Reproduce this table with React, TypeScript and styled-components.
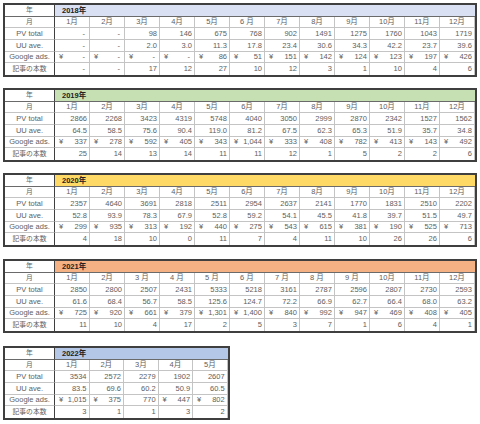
import styled, { createGlobalStyle } from 'styled-components';

const GlobalStyle = createGlobalStyle`
  html, body {
    margin: 0;
    padding: 0;
    background: #fff;
  }
  * {
    box-sizing: border-box;
  }
`;

const Page = styled.div`
  padding: 3px 3px 0 3px;
  display: flex;
  flex-direction: column;
  gap: 11px;
  font-family: 'Liberation Sans', 'Noto Sans CJK JP', sans-serif;
  font-size: 7.5px;
  color: #5e5e5e;
`;

const Sheet = styled.div<{ $months: number; $lift?: number }>`
  display: grid;
  grid-template-columns: 50px repeat(${(p) => p.$months}, 1fr);
  grid-template-rows: repeat(6, 1fr);
  width: ${(p) => 50 + p.$months * 35.33}px;
  height: 74px;
  border: 2px solid #3f3f3f;
  margin-top: ${(p) => p.$lift ?? 0}px;
`;

const Cell = styled.div<{ $align?: 'left' | 'center' | 'right'; $last?: boolean; $topRow?: boolean }>`
  display: flex;
  align-items: center;
  justify-content: ${(p) =>
    p.$align === 'center' ? 'center' : p.$align === 'left' ? 'flex-start' : 'flex-end'};
  padding: 0 2px;
  border-right: 1px solid #c4c4c4;
  border-bottom: ${(p) => (p.$last ? 'none' : p.$topRow ? '1px solid #6a6a6a' : '1px solid #c4c4c4')};
  white-space: nowrap;
  overflow: hidden;
  line-height: 1;
`;

const LabelCell = styled(Cell)`
  border-right: 1px solid #3f3f3f;
`;

const Cjk = styled.span`
  font-size: 6.8px;
`;

const YearCell = styled(Cell)<{ $bg: string }>`
  grid-column: 2 / -1;
  background: ${(p) => p.$bg};
  color: #222;
  font-weight: bold;
  padding-left: 7px;
  border-right: none;
`;

const MoneyCell = styled(Cell)`
  justify-content: space-between;
  padding-left: 4px;
`;

const Dash = styled.span`
  padding-right: 2px;
`;

type Year = {
  label: string;
  bg: string;
  months: string[];
  pv: string[];
  uu: string[];
  ads: string[];
  posts: string[];
  lift?: number;
};

const years: Year[] = [
  {
    label: '2018年',
    bg: '#d9e0f3',
    months: ['1月', '2月', '3月', '4月', '5月', '6 月', '7月', '8月', '9月', '10月', '11月', '12月'],
    pv: ['-', '-', '98', '146', '675', '768', '902', '1491', '1275', '1760', '1043', '1719'],
    uu: ['-', '-', '2.0', '3.0', '11.3', '17.8', '23.4', '30.6', '34.3', '42.2', '23.7', '39.6'],
    ads: ['¥ -', '¥ -', '¥ -', '¥ -', '¥ 86', '¥ 51', '¥ 151', '¥ 142', '¥ 124', '¥ 123', '¥ 197', '¥ 426'],
    posts: ['-', '-', '17', '12', '27', '10', '12', '3', '1', '10', '4', '6'],
  },
  {
    label: '2019年',
    bg: '#c6e0b4',
    months: ['1月', '2月', '3月', '4月', '5月', '6月', '7月', '8月', '9月', '10月', '11月', '12月'],
    pv: ['2866', '2268', '3423', '4319', '5748', '4040', '3050', '2999', '2870', '2342', '1527', '1562'],
    uu: ['64.5', '58.5', '75.6', '90.4', '119.0', '81.2', '67.5', '62.3', '65.3', '51.9', '35.7', '34.8'],
    ads: ['¥ 337', '¥ 278', '¥ 592', '¥ 405', '¥ 343', '¥ 1,044', '¥ 333', '¥ 408', '¥ 782', '¥ 413', '¥ 143', '¥ 492'],
    posts: ['25', '14', '13', '14', '11', '11', '12', '1', '5', '2', '2', '6'],
  },
  {
    label: '2020年',
    bg: '#ffd966',
    months: ['1月', '2月', '3月', '4月', '5月', '6月', '7月', '8月', '9月', '10月', '11月', '12月'],
    pv: ['2357', '4640', '3691', '2818', '2511', '2954', '2637', '2141', '1770', '1831', '2510', '2202'],
    uu: ['52.8', '93.9', '78.3', '67.9', '52.8', '59.2', '54.1', '45.5', '41.8', '39.7', '51.5', '49.7'],
    ads: ['¥ 299', '¥ 935', '¥ 313', '¥ 192', '¥ 440', '¥ 275', '¥ 543', '¥ 615', '¥ 381', '¥ 190', '¥ 525', '¥ 713'],
    posts: ['4', '18', '10', '0', '11', '7', '4', '11', '10', '26', '26', '6'],
  },
  {
    label: '2021年',
    bg: '#f4b183',
    months: ['1月', '2月', '3 月', '4 月', '5 月', '6 月', '7 月', '8 月', '9 月', '10月', '11月', '12月'],
    pv: ['2850', '2800', '2507', '2431', '5333', '5218', '3161', '2787', '2596', '2807', '2730', '2593'],
    uu: ['61.6', '68.4', '56.7', '58.5', '125.6', '124.7', '72.2', '66.9', '62.7', '66.4', '68.0', '63.2'],
    ads: ['¥ 725', '¥ 920', '¥ 661', '¥ 379', '¥ 1,301', '¥ 1,400', '¥ 840', '¥ 992', '¥ 947', '¥ 469', '¥ 408', '¥ 405'],
    posts: ['11', '10', '4', '17', '2', '5', '3', '7', '1', '6', '4', '1'],
    lift: 1,
  },
  {
    label: '2022年',
    bg: '#b4c7e7',
    months: ['1月', '2月', '3月', '4月', '5月'],
    pv: ['3534', '2572', '2279', '1902', '2607'],
    uu: ['83.5', '69.6', '60.2', '50.9', '60.5'],
    ads: ['¥ 1,015', '¥ 375', '770', '¥ 447', '¥ 802'],
    posts: ['3', '1', '1', '3', '2'],
    lift: 2,
  },
];

const Value = ({ v, last }: { v: string; last?: boolean }) => (
  <Cell $last={last}>{v === '-' ? <Dash>-</Dash> : v}</Cell>
);

const Money = ({ v }: { v: string }) => {
  if (!v.startsWith('¥')) return <Cell>{v}</Cell>;
  const amount = v.slice(2);
  return (
    <MoneyCell>
      <span>¥</span>
      {amount === '-' ? <Dash>-</Dash> : <span>{amount}</span>}
    </MoneyCell>
  );
};

const YearTable = ({ y }: { y: Year }) => (
  <Sheet $months={y.months.length} $lift={y.lift}>
    <LabelCell $align="center" $topRow>
      <Cjk>年</Cjk>
    </LabelCell>
    <YearCell $bg={y.bg} $align="left" $topRow>
      {y.label}
    </YearCell>

    <LabelCell $align="center">
      <Cjk>月</Cjk>
    </LabelCell>
    {y.months.map((m, i) => (
      <Cell key={i} $align="center">
        {m}
      </Cell>
    ))}

    <LabelCell $align="center">PV total</LabelCell>
    {y.pv.map((v, i) => (
      <Value key={i} v={v} />
    ))}

    <LabelCell $align="center">UU ave.</LabelCell>
    {y.uu.map((v, i) => (
      <Value key={i} v={v} />
    ))}

    <LabelCell $align="center">Google ads.</LabelCell>
    {y.ads.map((v, i) => (
      <Money key={i} v={v} />
    ))}

    <LabelCell $align="center" $last>
      <Cjk>記事の本数</Cjk>
    </LabelCell>
    {y.posts.map((v, i) => (
      <Value key={i} v={v} last />
    ))}
  </Sheet>
);

export default function App() {
  return (
    <>
      <GlobalStyle />
      <Page>
        {years.map((y) => (
          <YearTable key={y.label} y={y} />
        ))}
      </Page>
    </>
  );
}
